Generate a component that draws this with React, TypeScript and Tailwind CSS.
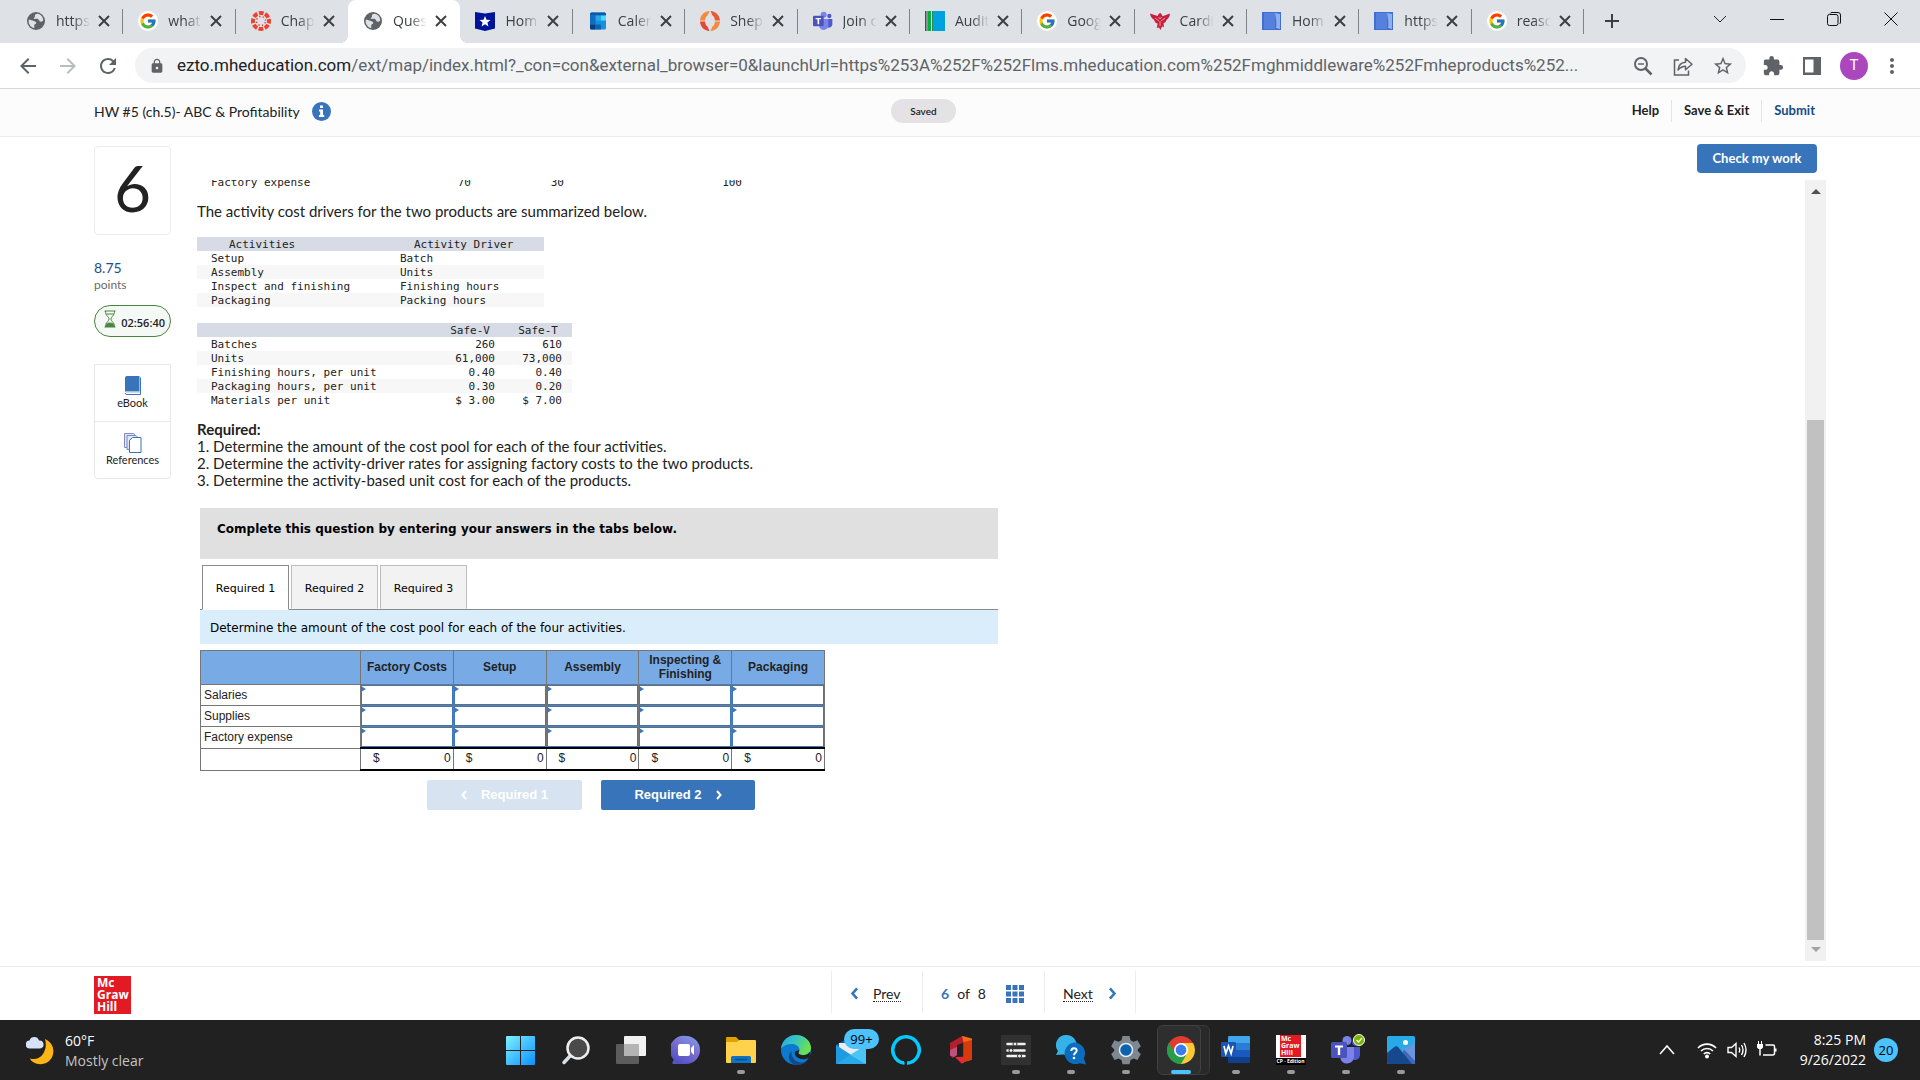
import type { ReactNode } from "react";
import { FcGoogle } from "react-icons/fc";
import {
  MdArrowBack,
  MdArrowForward,
  MdExtension,
  MdLock,
  MdMoreVert,
  MdRefresh,
  MdStarBorder,
} from "react-icons/md";

/* ---------- tab favicons ---------- */

function GlobeIcon() {
  return (
    <svg viewBox="0 0 20 20" className="h-5 w-5" aria-hidden>
      <circle cx="10" cy="10" r="9" fill="#5f6368" />
      <path
        d="M3 8.5 8 10c1.600.4 2.400 1.200 2.200 2.600l-1.900 1.200V17C4.800 16.400 2.600 13.500 2.600 10ZM11.500 2.800c-2 .2-2.800 1-2.600 2.400.3 1.500-1 1.200-1.200 2.600 1.500.5 3.300-.6 4.800.6 1 .9.700 2.200 2.400 2.300 1.200 0 1.700-.5 2.300-.9C17.400 6 15 3.300 11.500 2.800Z"
        fill="#dee1e6"
      />
    </svg>
  );
}

function GoogleFavicon() {
  return (
    <span className="flex h-5 w-5 items-center justify-center rounded-full bg-white">
      <FcGoogle className="h-[18px] w-[18px]" />
    </span>
  );
}

function CanvasIcon() {
  return (
    <svg viewBox="0 0 20 20" className="h-5 w-5" fill="none" stroke="#ef4130" aria-hidden>
      <circle cx="10" cy="10" r="8" strokeWidth="4" strokeDasharray="4.700 1.583" strokeDashoffset="2.350" />
      <circle cx="10" cy="10" r="4.500" strokeWidth="1.500" strokeDasharray="1.300 2.234" strokeDashoffset="-1.200" />
    </svg>
  );
}

function StarShieldIcon() {
  return (
    <svg viewBox="0 0 20 20" className="h-5 w-5" aria-hidden>
      <path d="M0 1l10 1.500L20 1v16.500L10 20 0 17.500Z" fill="#00149a" />
      <path d="m10 5 1.500 3.700 4 .3-3.100 2.600 1 3.900L10 13.300l-3.400 2.200 1-3.900L4.500 9l4-.3Z" fill="#fff" />
    </svg>
  );
}

function OutlookCalendarIcon() {
  return (
    <svg viewBox="0 0 20 20" className="h-5 w-5" aria-hidden>
      <rect x="2" y="1.500" width="16" height="17" rx="1.500" fill="#1490df" />
      <path d="M2 3a1.500 1.500 0 0 1 1.500-1.500h13A1.500 1.500 0 0 1 18 3v1.500H2Z" fill="#0c59a4" />
      <path d="M7.500 4.500H13v5H7.500z" fill="#28a8ea" />
      <path d="M13 4.500h5v5h-5z" fill="#50d9ff" />
      <path d="M2 4.500h5.500v9H2z" fill="#0f6cc0" />
      <path d="M2 13.500h5.500v5h-4A1.500 1.500 0 0 1 2 17Z" fill="#093f78" />
      <path d="M7.500 13.500H13v5H7.500z" fill="#0a66b5" />
    </svg>
  );
}

function ShepIcon() {
  return (
    <svg viewBox="0 0 20 20" className="h-5 w-5" aria-hidden>
      <path d="M9.500 0C4 .5.500 4 0 9.500h5c.3-2.500 1-4 2.500-5Z" fill="#f58a3c" />
      <path d="M10.500 0c5.500.5 9 4 9.500 9.500h-5c-.3-2.500-1-4-2.500-5Z" fill="#ea5a34" />
      <path d="M9.500 20C4 19.500.500 16 0 10.500h5c.3 2.500 1 4 2.500 5Z" fill="#e5472f" />
      <path d="M10.500 20c5.500-.5 9-4 9.500-9.500h-5c-.3 2.500-1 4-2.500 5Z" fill="#f58a3c" />
    </svg>
  );
}

function TeamsIcon({ className }: { className: string }) {
  return (
    <svg viewBox="0 0 30 30" className={className} aria-hidden>
      <circle cx="24.500" cy="7.500" r="3.200" fill="#5059c9" />
      <path d="M21 12h8v8a5 5 0 0 1-8 4Z" fill="#5059c9" />
      <circle cx="16" cy="5.500" r="4.500" fill="#7b83eb" />
      <path d="M10 12h13v9.500a7 7 0 0 1-13.500 2.500Z" fill="#7b83eb" />
      <rect x="0" y="7" width="16" height="16" rx="1.500" fill="#4b53bc" />
      <path d="M4 10.500h8v2H9.200v7.500H6.800v-7.500H4z" fill="#fff" />
    </svg>
  );
}

function StripesIcon() {
  return (
    <svg viewBox="0 0 20 20" className="h-5 w-5" aria-hidden>
      <path d="M0 0h20v20H0z" fill="#00a1df" />
      <path d="M0 0h1v20H0z" fill="#4a4f55" />
      <path d="M1 0h2v20H1z" fill="#8a9095" />
      <path d="M3 0h3v20H3z" fill="#00b140" />
      <path d="M6 0h1v20H6z" fill="#d9eedd" />
      <path d="M7 0h1v20H7z" fill="#2e8b57" />
    </svg>
  );
}

function CardinalIcon() {
  return (
    <svg viewBox="0 0 20 20" className="h-5 w-5" aria-hidden>
      <path
        d="M0 2.500 7.500 5 9 2.500 10.500 2l1.500 2 .5 1.200L20 2.500c-.2 3-1.500 5-3.500 6.200-.3 2-1.500 3-3 3.600L14 16l-2-.5-1.500 3.500-1.500-2.500-2 .5.500-4.500c-2-.5-3-2-3.500-3.800C1.500 7.500.3 5 0 2.500Z"
        fill="#c8203c"
      />
      <path d="m8.500 6 1.500 2 1.500-2M5 7l4 3M15 7l-4 3M10 10v5" stroke="#f3c7ce" strokeWidth=".7" fill="none" />
    </svg>
  );
}

function BookFavicon() {
  return (
    <svg viewBox="0 0 20 20" className="h-5 w-5" aria-hidden>
      <path d="M0 1h19v18H0z" fill="#3f6fd0" />
      <path d="M2 2h11v16H2z" fill="#5580dc" />
      <path d="m13 2 5 1v15l-4-1c1-4 0-10-1-15Z" fill="#8fb0f0" />
    </svg>
  );
}

type Tab = { label: string; icon: ReactNode; active?: boolean };

const TABS: Tab[] = [
  { label: "https", icon: <GlobeIcon /> },
  { label: "what", icon: <GoogleFavicon /> },
  { label: "Chap", icon: <CanvasIcon /> },
  { label: "Ques", icon: <GlobeIcon />, active: true },
  { label: "Hom", icon: <StarShieldIcon /> },
  { label: "Caler", icon: <OutlookCalendarIcon /> },
  { label: "Shep", icon: <ShepIcon /> },
  { label: "Join c", icon: <TeamsIcon className="h-5 w-5" /> },
  { label: "Audit", icon: <StripesIcon /> },
  { label: "Goog", icon: <GoogleFavicon /> },
  { label: "Cardi", icon: <CardinalIcon /> },
  { label: "Hom", icon: <BookFavicon /> },
  { label: "https", icon: <BookFavicon /> },
  { label: "reaso", icon: <GoogleFavicon /> },
];

function TabStrip() {
  return (
    <div className="flex h-[43px] shrink-0 bg-[#dee1e6] pl-[11px] text-[#3c4043]">
      <div className="flex max-w-[1573px] flex-1">
        {TABS.map((tab, i) => {
          const nextActive = TABS[i + 1]?.active;
          return (
            <div
              key={i}
              className={
                tab.active
                  ? "relative flex min-w-0 flex-1 items-center rounded-t-lg bg-white pb-[2px] pl-[15px]"
                  : "relative flex min-w-0 flex-1 items-center pb-[2px] pl-[15px]"
              }
            >
              {tab.active && (
                <>
                  <span className="absolute bottom-0 -left-2 h-2 w-2 bg-[radial-gradient(circle_at_0_0,transparent_8px,#fff_8px)]" />
                  <span className="absolute -right-2 bottom-0 h-2 w-2 bg-[radial-gradient(circle_at_100%_0,transparent_8px,#fff_8px)]" />
                </>
              )}
              {tab.icon}
              <span className="ml-[10px] w-[34px] overflow-hidden [mask-image:linear-gradient(to_right,#000_50%,transparent)] font-['Open_Sans',sans-serif] text-[14px] whitespace-nowrap">
                {tab.label}
              </span>
              <button type="button" aria-label={`Close ${tab.label}`} className="ml-2">
                <svg viewBox="0 0 12 12" className="h-3 w-3" stroke="#3c4043" strokeWidth="2" aria-hidden>
                  <path d="m1 1 10 10M11 1 1 11" />
                </svg>
              </button>
              {!tab.active && !nextActive && (
                <span className="absolute top-[9px] right-0 h-[25px] w-px bg-[#808489]" />
              )}
            </div>
          );
        })}
      </div>
      <button type="button" aria-label="New tab" className="ml-5 pb-px">
        <svg viewBox="0 0 16 16" className="h-4 w-4" stroke="#3c4043" strokeWidth="2" aria-hidden>
          <path d="M8 1v14M1 8h14" />
        </svg>
      </button>
      <div className="ml-auto flex h-[37px] items-center gap-[43px] pr-[22px]">
        <button type="button" aria-label="Search tabs">
          <svg viewBox="0 0 14 14" className="h-[14px] w-[14px]" fill="none" stroke="#222" aria-hidden>
            <path d="m1 4 6 6 6-6" />
          </svg>
        </button>
        <button type="button" aria-label="Minimize">
          <svg viewBox="0 0 14 14" className="h-[14px] w-[14px]" stroke="#111" aria-hidden>
            <path d="M0 7.500h14" />
          </svg>
        </button>
        <button type="button" aria-label="Restore">
          <svg viewBox="0 0 14 14" className="h-[14px] w-[14px]" fill="none" stroke="#111" aria-hidden>
            <rect x="0.500" y="2.500" width="10.500" height="11" rx="2" />
            <path d="M3 1.500Q3.500.5 5 .5h6Q13.500.5 13.500 3v7q0 1.500-1 2" />
          </svg>
        </button>
        <button type="button" aria-label="Close window">
          <svg viewBox="0 0 14 14" className="h-[14px] w-[14px]" stroke="#111" aria-hidden>
            <path d="m.5.5 13 13M13.500.5l-13 13" />
          </svg>
        </button>
      </div>
    </div>
  );
}

function AddressBar() {
  return (
    <div className="flex h-[46px] shrink-0 items-center border-b border-[#d5d7da] bg-white text-[#5f6368]">
      <div className="flex items-center gap-4 pl-4">
        <button type="button" aria-label="Back">
          <MdArrowBack className="h-6 w-6" />
        </button>
        <button type="button" aria-label="Forward" className="text-[#babcbe]">
          <MdArrowForward className="h-6 w-6" />
        </button>
        <button type="button" aria-label="Reload">
          <MdRefresh className="h-6 w-6" />
        </button>
      </div>
      <div className="ml-[15px] flex h-[35px] min-w-0 flex-1 items-center rounded-full bg-[#f1f3f4] pr-3 pl-[14px]">
        <MdLock className="h-4 w-4 shrink-0" aria-hidden />
        <div className="ml-3 flex-1 overflow-hidden font-['Roboto',sans-serif] text-[17px] whitespace-nowrap">
          <span className="text-[#202124]">ezto.mheducation.com</span>
          /ext/map/index.html?_con=con&amp;external_browser=0&amp;launchUrl=https%253A%252F%252Flms.mheducation.com%252Fmghmiddleware%252Fmheproducts%252...
        </div>
        <div className="flex shrink-0 items-center gap-[18px]">
          <button type="button" aria-label="Zoom">
            <svg viewBox="0 0 22 22" className="h-[22px] w-[22px]" fill="none" stroke="#5f6368" strokeWidth="2" aria-hidden>
              <circle cx="9" cy="9" r="6" />
              <path d="m13.500 13.500 6 6" strokeWidth="2.500" />
              <path d="M6 9h6" strokeWidth="1.500" />
            </svg>
          </button>
          <button type="button" aria-label="Share">
            <svg viewBox="0 0 22 22" className="h-[22px] w-[22px]" fill="none" stroke="#5f6368" strokeWidth="1.500" aria-hidden>
              <path d="M7 5H2.500v15h14v-4.500" />
              <path d="M6 15c.5-5 3-7.500 7.500-7.800V3.500L20 9.200l-6.500 5.600v-3.600C10 11.200 8 12.500 6 15Z" strokeLinejoin="round" />
            </svg>
          </button>
          <button type="button" aria-label="Bookmark this page">
            <MdStarBorder className="h-[22px] w-[22px]" />
          </button>
        </div>
      </div>
      <div className="flex items-center gap-4 pl-4">
        <button type="button" aria-label="Extensions">
          <MdExtension className="h-[22px] w-[22px]" />
        </button>
        <button type="button" aria-label="Side panel" className="px-[3px]">
          <svg viewBox="0 0 18 18" className="h-[18px] w-[18px]" aria-hidden>
            <path d="M0 0h18v18H0zM2 2.500v13h8.500v-13z" fill="#5f6368" fillRule="evenodd" />
          </svg>
        </button>
        <button
          type="button"
          aria-label="Profile"
          className="flex h-7 w-7 items-center justify-center rounded-full bg-[#ab47bc] font-['Roboto',sans-serif] text-[15px] text-white"
        >
          T
        </button>
      </div>
      <button type="button" aria-label="Menu" className="mr-4 ml-3">
        <MdMoreVert className="h-6 w-6" />
      </button>
    </div>
  );
}

function AssignmentHeader() {
  return (
    <header className="grid h-[48px] shrink-0 grid-cols-[1fr_auto_1fr] items-center border-b border-[#ededed] bg-[#fcfcfc] pr-[105px] pb-[3px] pl-[94px] text-[#222]">
      <div className="flex items-center gap-3">
        <h1 className="text-[14px]">HW #5 (ch.5)- ABC &amp; Profitability</h1>
        <button type="button" aria-label="Assignment information">
          <svg viewBox="0 0 19 19" className="h-[19px] w-[19px]" aria-hidden>
            <circle cx="9.500" cy="9.500" r="9.500" fill="#3874ba" />
            <path d="M8 3.500h3V6H8zM7 7.500h4V13h1.200v2H7v-2h1.200V9.500H7z" fill="#fff" />
          </svg>
        </button>
      </div>
      <span className="mr-[62px] flex h-6 w-[65px] items-center justify-center rounded-full bg-[#e4e2e4] text-[10px] font-semibold">
        Saved
      </span>
      <nav className="flex items-center justify-end text-[13px] font-bold">
        <a href="#help" className="pr-3">
          Help
        </a>
        <a href="#exit" className="border-x border-[#e4e4e4] px-3 py-px">
          Save &amp; Exit
        </a>
        <a href="#submit" className="pl-3 text-[#164b86]">
          Submit
        </a>
      </nav>
    </header>
  );
}

function QuestionSidebar() {
  return (
    <aside className="w-[77px] shrink-0 pt-[9px] text-[#222]">
      <div className="flex h-[89px] items-center justify-center rounded border border-[#ececec] pb-[6px] text-[64px] leading-none">
        6
      </div>
      <p className="mt-6 text-[14px] leading-[18px] text-[#1c4f8c]">8.75</p>
      <p className="text-[12px] leading-4 text-[#6a6a6a]">points</p>
      <div className="mt-3 flex h-8 items-center justify-between rounded-full border border-[#4b8340] bg-[#f5f9f5] pr-[5px] pl-[9px]">
        <svg viewBox="0 0 12 18" className="mb-1 h-[18px] w-3" fill="none" stroke="#4b8340" aria-hidden>
          <path d="M.5 1h11M.5 17h11M1.500 1c0 5 3.500 5.500 3.500 8s-3.500 3-3.500 8M10.500 1c0 5-3.500 5.500-3.500 8s3.500 3 3.500 8M2.500 4h7" />
          <path d="M2 16.500c0-2.500 2-3.500 4-3.500s4 1 4 3.500Z" fill="#4b8340" />
        </svg>
        <span className="pt-1 font-['Open_Sans',sans-serif] text-[11px] font-semibold">02:56:40</span>
      </div>
      <div className="mt-[27px] flex flex-col rounded-b border border-[#e8e8e8] text-[11px] leading-[14px]">
        <button type="button" className="flex h-[57px] flex-col items-center justify-center border-b border-[#e8e8e8]">
          <svg viewBox="0 0 18 20" className="h-5 w-[18px]" aria-hidden>
            <path d="M3 0h12.500v15.500H1V2a2 2 0 0 1 2-2Z" fill="#3874ba" />
            <path d="M16.500 1.500V18.500H3a2 2 0 0 1-2-1.500" fill="none" stroke="#3874ba" />
            <path d="M2 16.200h14" stroke="#b9cde6" />
          </svg>
          eBook
        </button>
        <button type="button" className="flex h-14 flex-col items-center justify-center">
          <svg viewBox="0 0 18 20" className="h-5 w-[18px]" stroke="#3874ba" fill="#dfe6f5" aria-hidden>
            <path d="M.5.500h9l2 2v12H.5Z" stroke="#8a86c4" />
            <path d="M3 2.500h9l2 2v12H3Z" stroke="#6c8cc8" />
            <path d="M5.500 7.500l3-3h8.500v15H5.500Z" fill="#fff" />
          </svg>
          References
        </button>
      </div>
    </aside>
  );
}

const DRIVERS = [
  ["Setup", "Batch"],
  ["Assembly", "Units"],
  ["Inspect and finishing", "Finishing hours"],
  ["Packaging", "Packing hours"],
];

const PRODUCTS = [
  ["Batches", "260", "610"],
  ["Units", "61,000", "73,000"],
  ["Finishing hours, per unit", "0.40", "0.40"],
  ["Packaging hours, per unit", "0.30", "0.20"],
  ["Materials per unit", "$ 3.00", "$ 7.00"],
];

function ProblemText() {
  return (
    <section className="text-[15px] leading-[17px] text-[#222]">
      <table className="-mt-1 w-[560px] table-fixed font-['DejaVu_Sans_Mono',monospace] text-[11px] leading-[14px]">
        <tbody>
          <tr>
            <td className="w-[234px] pl-[14px]">Factory expense</td>
            <td className="w-[40px] text-right">70</td>
            <td className="w-[93px] text-right">30</td>
            <td className="w-[178px] text-right">100</td>
            <td />
          </tr>
        </tbody>
      </table>
      <p className="mt-[13px]">The activity cost drivers for the two products are summarized below.</p>
      <table className="mt-[17px] w-[347px] table-fixed font-['DejaVu_Sans_Mono',monospace] text-[11px] leading-[13px]">
        <thead>
          <tr className="bg-[#d7dbe6]">
            <th className="w-[203px] pt-px pl-8 text-left font-normal">Activities</th>
            <th className="pt-px pl-[14px] text-left font-normal">Activity Driver</th>
          </tr>
        </thead>
        <tbody>
          {DRIVERS.map(([activity, driver]) => (
            <tr key={activity} className="even:bg-[#f7f7f7]">
              <td className="pt-px pl-[14px]">{activity}</td>
              <td className="pt-px">{driver}</td>
            </tr>
          ))}
        </tbody>
      </table>
      <table className="mt-4 w-[375px] table-fixed font-['DejaVu_Sans_Mono',monospace] text-[11px] leading-[13px]">
        <thead>
          <tr className="bg-[#d7dbe6]">
            <th className="w-[232px]">
              <span className="sr-only">Item</span>
            </th>
            <th className="pt-px pr-[5px] text-right font-normal">Safe-V</th>
            <th className="w-[77px] pt-px pr-[14px] text-right font-normal">Safe-T</th>
          </tr>
        </thead>
        <tbody>
          {PRODUCTS.map(([item, v, t]) => (
            <tr key={item} className="even:bg-[#f7f7f7]">
              <td className="pt-px pl-[14px]">{item}</td>
              <td className="pt-px text-right">{v}</td>
              <td className="pt-px pr-[10px] text-right">{t}</td>
            </tr>
          ))}
        </tbody>
      </table>
      <p className="mt-[14px] font-bold">Required:</p>
      <p>1. Determine the amount of the cost pool for each of the four activities.</p>
      <p>2. Determine the activity-driver rates for assigning factory costs to the two products.</p>
      <p>3. Determine the activity-based unit cost for each of the products.</p>
    </section>
  );
}

const COLUMNS = ["Factory Costs", "Setup", "Assembly", "Inspecting & Finishing", "Packaging"];
const ROWS = ["Salaries", "Supplies", "Factory expense"];

function AnswerTable() {
  return (
    <table className="mt-[6px] w-[625px] table-fixed border-collapse border border-[#767676] font-['Liberation_Sans',Arial,sans-serif] text-[12px] leading-[14px] text-[#222]">
      <thead>
        <tr className="h-[34px] bg-[#78abe6]">
          <th className="w-[160px] border border-[#767676]">
            <span className="sr-only">Cost</span>
          </th>
          {COLUMNS.map((name) => (
            <th key={name} scope="col" className="border border-[#767676] px-1 pb-px">
              {name}
            </th>
          ))}
        </tr>
      </thead>
      <tbody>
        {ROWS.map((row) => (
          <tr key={row}>
            <th scope="row" className="border border-[#767676] pl-[3px] text-left font-normal">
              {row}
            </th>
            {COLUMNS.map((name) => (
              <td key={name} className="relative border border-[#767676] p-0">
                <input
                  type="text"
                  aria-label={`${row}, ${name}`}
                  className="block h-5 w-full border border-[#3f78b8] bg-white px-2 outline-none"
                />
                <span className="absolute top-px left-0 border-y-[3px] border-l-[5px] border-y-transparent border-l-[#3f78b8]" />
              </td>
            ))}
          </tr>
        ))}
        <tr className="h-[22px]">
          <th scope="row" className="border border-[#767676]">
            <span className="sr-only">Total</span>
          </th>
          {COLUMNS.map((name) => (
            <td key={name} className="border border-t-2 border-b-2 border-[#767676] border-y-black p-0">
              <div className="flex justify-between pr-[2px] pb-[2px] pl-3">
                <span>$</span>
                <span>0</span>
              </div>
            </td>
          ))}
        </tr>
      </tbody>
    </table>
  );
}

function AnswerPanel() {
  const tabBase = "h-11 w-[87px] border pt-1";
  return (
    <section className="mt-[19px] ml-[3px] w-[798px] font-['DejaVu_Sans',Verdana,sans-serif] text-black">
      <h2 className="h-[51px] bg-[#e0e0e0] pt-[13px] pl-[17px] text-[12px] leading-4 font-bold">
        Complete this question by entering your answers in the tabs below.
      </h2>
      <div role="tablist" className="mt-[6px] flex items-start gap-[2px] border-b border-[#8a8a8a] pl-[2px] text-[11px]">
        <button type="button" role="tab" aria-selected="true" className={`${tabBase} -mb-px h-[45px] border-[#8a8a8a] border-b-white bg-white`}>
          Required 1
        </button>
        <button type="button" role="tab" aria-selected="false" className={`${tabBase} border-[#bdbdbd] border-b-[#f2f2f2] bg-[#f2f2f2]`}>
          Required 2
        </button>
        <button type="button" role="tab" aria-selected="false" className={`${tabBase} border-[#bdbdbd] border-b-[#f2f2f2] bg-[#f2f2f2]`}>
          Required 3
        </button>
      </div>
      <p className="bg-[#daedfb] px-[10px] pt-[10px] pb-2 text-[12px] leading-4">
        Determine the amount of the cost pool for each of the four activities.
      </p>
      <AnswerTable />
      <div className="mt-[9px] flex gap-[19px] pl-[227px] font-['Liberation_Sans',Arial,sans-serif] text-[13px] font-bold text-white">
        <button type="button" disabled className="flex h-[30px] w-[155px] items-center justify-center gap-[14px] rounded-xs bg-[#d8e3f1]">
          <ChevronLeft className="h-[10px] w-[6px]" />
          Required 1
        </button>
        <button type="button" className="flex h-[30px] w-[154px] items-center justify-center gap-[14px] rounded-xs bg-[#3874ba]">
          Required 2
          <ChevronRight className="h-[10px] w-[6px]" />
        </button>
      </div>
    </section>
  );
}

function ChevronLeft({ className }: { className: string }) {
  return (
    <svg viewBox="0 0 6 10" className={className} fill="none" stroke="currentColor" strokeWidth="2" aria-hidden>
      <path d="M5 1 1.500 5 5 9" />
    </svg>
  );
}

function ChevronRight({ className }: { className: string }) {
  return (
    <svg viewBox="0 0 6 10" className={className} fill="none" stroke="currentColor" strokeWidth="2" aria-hidden>
      <path d="m1 1 3.500 4L1 9" />
    </svg>
  );
}

function ScrollBar() {
  return (
    <div className="flex w-[21px] shrink-0 flex-col items-center bg-[#f1f1f1]" aria-hidden>
      <div className="mt-[9px] border-x-[5px] border-b-[5px] border-x-transparent border-b-[#505050]" />
      <div className="grow-[226]" />
      <div className="w-[17px] grow-[520] bg-[#c1c1c1]" />
      <div className="mt-[7px] mb-[9px] border-x-[5px] border-t-[5px] border-x-transparent border-t-[#a3a3a3]" />
    </div>
  );
}

function McGrawHillLogo() {
  return (
    <div className="mt-[3px] h-[38px] w-[37px] bg-[#e21a23] pt-px pl-[3px] font-['Open_Sans',sans-serif] text-[12px] leading-[12px] font-bold text-white">
      Mc
      <br />
      Graw
      <br />
      Hill
    </div>
  );
}

function PageFooter() {
  return (
    <footer className="flex h-[54px] shrink-0 items-center border-t border-[#ededed] bg-white pl-[94px] text-[#222]">
      <McGrawHillLogo />
      <nav className="mr-[84px] mb-1 flex h-[42px] flex-1 justify-center text-[14px]">
        <a href="#prev" className="flex w-[91px] items-center gap-[14px] border-l border-[#ededed] pt-1 pl-[18px]">
          <ChevronLeft className="h-[13px] w-[9px] text-[#3874ba]" />
          <span className="border-b border-dotted border-[#222] leading-[15px]">Prev</span>
        </a>
        <div className="flex w-[122px] items-center gap-2 border-l border-[#ededed] pt-1 pl-[18px]">
          <span className="font-bold text-[#3874ba]">6</span>
          <span>of</span>
          <span>8</span>
          <button type="button" aria-label="Question list" className="ml-3">
            <svg viewBox="0 0 18 18" className="h-[18px] w-[18px]" fill="#3874ba" aria-hidden>
              <path d="M0 0h5v5H0zM6.500 0h5v5h-5zM13 0h5v5h-5zM0 6.500h5v5H0zM6.500 6.500h5v5h-5zM13 6.500h5v5h-5zM0 13h5v5H0zM6.500 13h5v5h-5zM13 13h5v5h-5z" />
            </svg>
          </button>
        </div>
        <a href="#next" className="flex w-[92px] items-center gap-[15px] border-x border-[#ededed] pt-1 pl-[18px]">
          <span className="border-b border-dotted border-[#222] leading-[15px]">Next</span>
          <ChevronRight className="h-[13px] w-[9px] text-[#3874ba]" />
        </a>
      </nav>
    </footer>
  );
}

/* ---------- taskbar ---------- */

const ICON = "h-[30px] w-[30px]";

function WindowsIcon() {
  return (
    <svg viewBox="0 0 30 30" className={ICON} aria-hidden>
      <defs>
        <linearGradient id="win" x1="0" y1="0" x2="1" y2="1">
          <stop offset="0" stopColor="#7df0ff" />
          <stop offset="1" stopColor="#0a91ff" />
        </linearGradient>
      </defs>
      <path
        d="M0 2a1 1 0 0 1 1-1h13v14H0zM15 1h13a1 1 0 0 1 1 1v13H15zM0 16h14v14H1a1 1 0 0 1-1-1zM15 16h14v13a1 1 0 0 1-1 1H15z"
        fill="url(#win)"
      />
    </svg>
  );
}

function SearchIcon() {
  return (
    <svg viewBox="0 0 30 30" className={ICON} aria-hidden>
      <path d="m10 20-7 7.500" stroke="#dcdfe1" strokeWidth="3.500" strokeLinecap="round" />
      <circle cx="17" cy="13" r="10.500" fill="#4a4a4a" stroke="#eceeef" strokeWidth="2.500" />
    </svg>
  );
}

function TaskViewIcon() {
  return (
    <svg viewBox="0 0 30 30" className={ICON} aria-hidden>
      <rect x="0" y="9" width="23" height="20" rx="1" fill="#5c5c5c" />
      <rect x="8" y="1" width="22" height="20" rx="1" fill="#f1f1f1" />
      <path d="M8 9h15v12H8z" fill="#b4b4b4" />
    </svg>
  );
}

function ChatIcon() {
  return (
    <svg viewBox="0 0 30 30" className={ICON} aria-hidden>
      <defs>
        <linearGradient id="chat" x1="1" y1="0" x2="0.400" y2="1">
          <stop offset="0" stopColor="#7fa6f0" />
          <stop offset="0.500" stopColor="#7b6fd0" />
          <stop offset="1" stopColor="#5452c4" />
        </linearGradient>
      </defs>
      <path d="M15.500 1A14 14 0 0 1 29 15a14 14 0 0 1-14 14H2.500c-1.500 0-1.800-1-.8-2l1-2.500A14 14 0 0 1 15.500 1Z" fill="url(#chat)" />
      <rect x="7" y="9" width="12" height="12" rx="2" fill="#fff" />
      <path d="m20 13 3-3v10l-3-3Z" fill="#fff" />
    </svg>
  );
}

function FolderIcon() {
  return (
    <svg viewBox="0 0 30 30" className={ICON} aria-hidden>
      <path d="M0 3a1 1 0 0 1 1-1h9l3 3v5H0Z" fill="#e0a000" />
      <path d="M0 7h11l2.500-2H29a1 1 0 0 1 1 1v21a1 1 0 0 1-1 1H1a1 1 0 0 1-1-1Z" fill="#ffd24d" />
      <path d="M5 28v-5.500A1.500 1.500 0 0 1 6.500 21h17a1.500 1.500 0 0 1 1.500 1.500V28Z" fill="#0f74c4" />
      <path d="M9 24.500h12" stroke="#0a4d8c" strokeWidth="1.500" />
    </svg>
  );
}

function EdgeIcon() {
  return (
    <svg viewBox="0 0 30 30" className={ICON} aria-hidden>
      <defs>
        <linearGradient id="edge-top" x1="0" y1="0" x2="1" y2="0.400">
          <stop offset="0" stopColor="#2aa7e6" />
          <stop offset="0.500" stopColor="#35c5c0" />
          <stop offset="1" stopColor="#6de04f" />
        </linearGradient>
      </defs>
      <circle cx="15" cy="15" r="15" fill="#0d7ad0" />
      <path d="M0 13.500C1 5.500 7 0 15 0c8.500 0 15 6 15 13 0 4.500-3.500 7-7.500 7-3 0-5-1-5-2 0-.8 1-1.300 1-3.200C18.500 11.500 15 9 11 9 6 9 2 11 0 13.500Z" fill="url(#edge-top)" />
      <path d="M10.500 16c-1 6 4 11.500 10 11.500 2.800 0 5-1 7.200-3C25 28 20.500 30 15.500 30 8.500 29.500 5 21 10.500 16Z" fill="#114a8b" />
      <path d="M18.200 15c.2 1.500-1 2-.8 3 .3 1.500 3 2.500 6 2 2-.2 4.500-1.500 5.800-3.500l-.5 6-4 1.500c-7 1.500-12-3-10.700-7.500Z" fill="#212121" />
    </svg>
  );
}

function MailIcon() {
  return (
    <svg viewBox="0 0 30 30" className={ICON} aria-hidden>
      <path d="M0 10 15 1l15 9v18a1 1 0 0 1-1 1H1a1 1 0 0 1-1-1Z" fill="#0d5fae" />
      <path d="M3 8h24v8l-12 8L3 14Z" fill="#e9edf2" />
      <path d="M0 10v18a1 1 0 0 0 1 1h28Z" fill="#1f9be0" />
      <path d="M30 10v18a1 1 0 0 1-1 1L14 20Z" fill="#4cc4f5" />
      <path d="M14 20 29 29H1Z" fill="#2aa9ea" />
    </svg>
  );
}

function AlexaIcon() {
  return (
    <svg viewBox="0 0 30 30" className={ICON} fill="none" stroke="#00caff" strokeWidth="3.500" aria-hidden>
      <path d="M12.500 28A13.200 13.200 0 1 1 16 28.200" />
      <path d="M12 26.500c.8 1 .8 2 .5 3" strokeWidth="2" />
    </svg>
  );
}

function OfficeIcon() {
  return (
    <svg viewBox="0 0 30 30" className={ICON} aria-hidden>
      <path d="m4 8 12-7 5 1-1.500 5-8.500 3v10l-4.500 3L4 20Z" fill="#b3202b" />
      <path d="M16 1 26 3.500v21L17.500 27V7Z" fill="#f36b16" />
      <path d="m18 7 8-2v20l-8 2Z" fill="#d93a0c" />
      <path d="m9 22 9-.2V28L15.500 28.500Z" fill="#e8283a" />
      <path d="M4 15v5.500l4 1.500 3-2V12Z" fill="#c2507c" />
    </svg>
  );
}

function SlidersIcon() {
  return (
    <svg viewBox="0 0 30 30" className={ICON} aria-hidden>
      <path d="M0 0h30v30H0z" fill="#313131" />
      <path d="M6.500 9h17M6.500 15.500h17M6.500 21h17" stroke="#f2f2f2" strokeWidth="2.500" strokeLinecap="round" />
      <g fill="#f2f2f2" stroke="#2a2a2a">
        <circle cx="14" cy="9" r="2" />
        <circle cx="10" cy="15.500" r="2" />
        <circle cx="18.500" cy="21" r="2" />
      </g>
    </svg>
  );
}

function GetHelpIcon() {
  return (
    <svg viewBox="0 0 30 30" className={ICON} aria-hidden>
      <path d="M10.500 0a10 10 0 1 1-3 19.500L0 20l2-4A10 10 0 0 1 10.500 0Z" fill="#35b3e8" />
      <path d="M18 7.500a10.800 10.800 0 0 1 9.800 15.800L30 29.500l-6.500-1.300A10.800 10.800 0 1 1 18 7.500Z" fill="#0c6cbd" />
      <path d="M15.300 16c0-3.800 5.600-3.700 5.400-.2-.1 2-2.700 2-2.700 4.400" stroke="#fff" strokeWidth="2" fill="none" />
      <circle cx="18" cy="23" r="1.300" fill="#fff" />
    </svg>
  );
}

function SettingsIcon() {
  return (
    <svg viewBox="0 0 30 30" className={ICON} aria-hidden>
      <path
        d="m11.500 1 7 0 1 4.200 3 1.600 4-1.500 3.300 6-3 3v1.600l3 3-3.300 6-4-1.500-3 1.600-1 4.200h-7l-1-4.200-3-1.600-4 1.500-3.300-6 3-3v-1.600l-3-3 3.300-6 4 1.500 3-1.600Z"
        fill="#7e8890"
      />
      <circle cx="15" cy="15" r="6.500" fill="#0a63b0" stroke="#e9ecee" strokeWidth="1.500" />
    </svg>
  );
}

function ChromeIcon() {
  return (
    <svg viewBox="0 0 30 30" className={ICON} aria-hidden>
      <path d="M15 15 2.900 8a14 14 0 0 1 24.200 0Z" fill="#e33b2e" />
      <path d="M15 15 27.100 8A14 14 0 0 1 15 29Z" fill="#fcc934" />
      <path d="M15 15v14A14 14 0 0 1 2.900 8Z" fill="#2a9c4a" />
      <path d="M15 8h12.100l-6 10.500Z" fill="#fcc934" />
      <path d="m9 18.500-6.100-10.500L15 8Z" fill="#e33b2e" />
      <path d="M2.900 8 9 18.500l3 2.500L15 29A14 14 0 0 1 2.900 8Z" fill="#2a9c4a" />
      <path d="m21 18.500-6 10.500-6-10Z" fill="#fcc934" />
      <path d="M9 18.500 3 8.200A14 14 0 0 0 15 29l5.500-9.500Z" fill="#2a9c4a" />
      <circle cx="15" cy="15" r="7" fill="#fff" />
      <circle cx="15" cy="15" r="5.400" fill="#3b7ded" />
    </svg>
  );
}

function WordIcon() {
  return (
    <svg viewBox="0 0 30 30" className={ICON} aria-hidden>
      <path d="M7 2a1 1 0 0 1 1-1h20a1 1 0 0 1 1 1v6H7Z" fill="#41a5ee" />
      <path d="M7 8h22v7H7z" fill="#2b7cd3" />
      <path d="M7 15h22v7H7z" fill="#185abd" />
      <path d="M7 22h22v5a1 1 0 0 1-1 1H8a1 1 0 0 1-1-1Z" fill="#103f91" />
      <rect x="0" y="7" width="15" height="15" rx="1" fill="#1a56b5" />
      <path d="m3 11 1.800 7.500L7.500 11l2.600 7.500L12 11" fill="none" stroke="#fff" strokeWidth="1.700" />
    </svg>
  );
}

function McGrawHillAppIcon() {
  return (
    <div className="flex h-[30px] w-[30px] flex-col bg-white font-['Open_Sans',sans-serif] font-bold text-white">
      <div className="mx-auto h-[22px] w-[21px] bg-[#e21a23] pl-px text-left text-[7px] leading-[7px]">
        Mc
        <br />
        Graw
        <br />
        Hill
      </div>
      <div className="mt-px flex-1 bg-black text-center text-[5px] leading-[7px]">CP · Edition</div>
    </div>
  );
}

function TeamsAppIcon() {
  return (
    <div className="relative">
      <TeamsIcon className={ICON} />
      <svg viewBox="0 0 12 12" className="absolute -top-px -right-1 h-3 w-3" aria-hidden>
        <circle cx="6" cy="6" r="5.500" fill="#79b500" stroke="#fff" />
        <path d="m3.500 6 2 2 3.500-4" fill="none" stroke="#fff" strokeWidth="1.300" />
      </svg>
    </div>
  );
}

function PhotosIcon() {
  return (
    <svg viewBox="0 0 30 30" className={ICON} aria-hidden>
      <rect x="1" y="1" width="28" height="28" rx="1.500" fill="#28aae8" />
      <path d="M16 15 29 8v20H16Z" fill="#6b94dc" />
      <path d="M18 14.500 29 26v3H12Z" fill="#4068bd" />
      <path d="M1 18 9 11.500q1.500-.8 3 .5L26 29H2.500A1.500 1.500 0 0 1 1 27.500Z" fill="#15488c" />
      <circle cx="19.500" cy="7.500" r="2.500" fill="#fff" />
    </svg>
  );
}

type App = { name: string; icon: ReactNode; running?: boolean; focused?: boolean; badge?: string };

const APPS: App[] = [
  { name: "Start", icon: <WindowsIcon /> },
  { name: "Search", icon: <SearchIcon /> },
  { name: "Task view", icon: <TaskViewIcon /> },
  { name: "Chat", icon: <ChatIcon /> },
  { name: "File Explorer", icon: <FolderIcon />, running: true },
  { name: "Edge", icon: <EdgeIcon /> },
  { name: "Mail", icon: <MailIcon />, badge: "99+" },
  { name: "Alexa", icon: <AlexaIcon /> },
  { name: "Office", icon: <OfficeIcon /> },
  { name: "Audio control", icon: <SlidersIcon />, running: true },
  { name: "Get Help", icon: <GetHelpIcon />, running: true },
  { name: "Settings", icon: <SettingsIcon />, running: true },
  { name: "Chrome", icon: <ChromeIcon />, focused: true },
  { name: "Word", icon: <WordIcon />, running: true },
  { name: "McGraw Hill", icon: <McGrawHillAppIcon />, running: true },
  { name: "Teams", icon: <TeamsAppIcon />, running: true },
  { name: "Photos", icon: <PhotosIcon />, running: true },
];

function TaskbarApp({ app }: { app: App }) {
  return (
    <button type="button" aria-label={app.name} className="relative flex h-[60px] w-[55px] items-center justify-center">
      {app.focused && (
        <>
          <span className="absolute top-[5px] right-[-2px] h-[50px] w-5 rounded-md border border-[#3a3a3a] bg-[#292929]" />
          <span className="absolute top-[5px] left-[4px] h-[50px] w-[44px] rounded-md border border-[#414141] bg-[#2e2e2e]" />
        </>
      )}
      <span className="relative">{app.icon}</span>
      {app.badge && (
        <span className="absolute top-[9px] left-[21px] flex h-5 w-[35px] items-center justify-center rounded-full bg-[#4cc2ff] font-['Open_Sans',sans-serif] text-[13px] text-black">
          {app.badge}
        </span>
      )}
      {app.running && <span className="absolute bottom-[6px] h-1 w-2 rounded-full bg-[#9a9a9a]" />}
      {app.focused && <span className="absolute bottom-[6px] h-1 w-5 rounded-full bg-[#4cc2ff]" />}
    </button>
  );
}

function Taskbar() {
  return (
    <div className="grid h-[60px] shrink-0 grid-cols-[1fr_auto_1fr] items-center bg-[#212121] pl-px font-['Open_Sans',sans-serif] text-[14px] leading-5 text-white">
      <div className="flex items-center gap-[11px] pt-px pl-[25px]">
        <svg viewBox="0 0 28 28" className="h-7 w-7" aria-hidden>
          <path d="M19 2c7 3 10 10 7.500 17C24 26 15 30 7 25c-1.500-1-2.500-2-3-3.500 5 1.500 10 0 13-4.500 3-5 3.500-10 2-15Z" fill="#fdb515" />
          <path d="M4 11.500a4 4 0 0 1-.5-8A5 5 0 0 1 13 3.500a4 4 0 0 1 1 8Z" fill="#d5e2f7" />
        </svg>
        <div>
          <div>60°F</div>
          <div className="text-[#c4c4c4]">Mostly clear</div>
        </div>
      </div>
      <div className="flex">
        {APPS.map((app) => (
          <TaskbarApp key={app.name} app={app} />
        ))}
      </div>
      <div className="flex items-center justify-end pr-[22px]">
        <svg viewBox="0 0 16 16" className="mr-[22px] h-4 w-4" fill="none" stroke="#fff" strokeWidth="1.500" aria-hidden>
          <path d="m1 12 7-8 7 8" />
        </svg>
        <svg viewBox="0 0 20 18" className="mr-[10px] h-[18px] w-5" fill="none" stroke="#fff" strokeWidth="1.600" aria-hidden>
          <path d="M1 7a12.500 12.500 0 0 1 18 0M4 10a8.500 8.500 0 0 1 12 0M6.800 13a4.500 4.500 0 0 1 6.400 0" />
          <circle cx="10" cy="15.500" r="1.200" fill="#fff" />
        </svg>
        <svg viewBox="0 0 20 18" className="mr-[10px] h-[18px] w-5" fill="none" stroke="#fff" strokeWidth="1.400" aria-hidden>
          <path d="M1 6.500h3.500L9 2.500v13l-4.500-4H1ZM12 6.500q1.500 2.500 0 5M14.500 4q3 5 0 10M17 2q4 7 0 14" />
        </svg>
        <svg viewBox="0 0 20 18" className="mr-[23px] h-[18px] w-5" fill="none" stroke="#fff" strokeWidth="1.500" aria-hidden>
          <path d="M8.500 4H16a1.500 1.500 0 0 1 1.500 1.500v7A1.500 1.500 0 0 1 16 14H6M18.800 7.500v3M3 7v7.500" />
          <path d="M0 3h6v3.500L4.500 8h-3L0 6.500ZM1 0h1v3H1zM4 0h1v3H4z" fill="#fff" stroke="none" />
        </svg>
        <div className="text-right">
          <div>8:25 PM</div>
          <div>9/26/2022</div>
        </div>
        <span className="ml-2 flex h-6 w-6 items-center justify-center rounded-full bg-[#4cc2ff] text-[13px] text-black">
          20
        </span>
      </div>
    </div>
  );
}

export default function App() {
  return (
    <div className="flex h-screen flex-col overflow-hidden bg-white font-['Lato',sans-serif]">
      <TabStrip />
      <AddressBar />
      <AssignmentHeader />
      <main className="flex min-h-0 flex-1 pr-[94px] pl-[94px]">
        <QuestionSidebar />
        <div className="flex min-w-0 flex-1 flex-col pb-[5px] pl-[26px]">
          <div className="flex h-[43px] shrink-0 items-center justify-end pr-[9px]">
            <button type="button" className="h-[29px] w-[120px] rounded-sm bg-[#3874ba] text-[13px] font-bold text-white">
              Check my work
            </button>
          </div>
          <div className="flex min-h-0 flex-1">
            <div className="min-w-0 flex-1 overflow-hidden">
              <ProblemText />
              <AnswerPanel />
            </div>
            <ScrollBar />
          </div>
        </div>
      </main>
      <PageFooter />
      <Taskbar />
    </div>
  );
}
